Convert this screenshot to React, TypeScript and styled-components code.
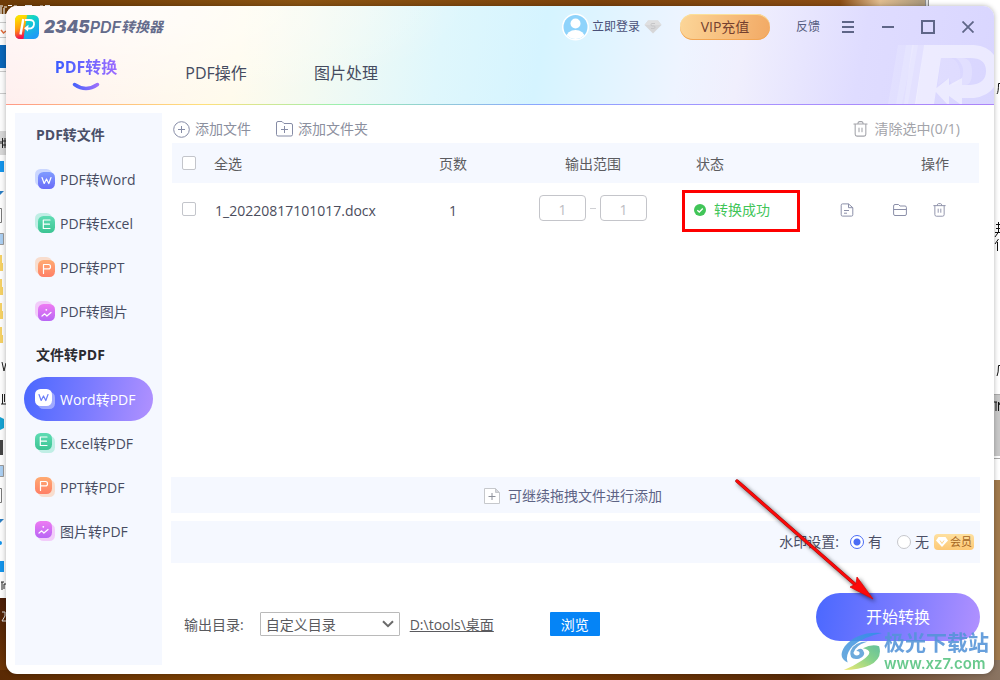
import React, { useState } from "react";
import styled, { createGlobalStyle, css } from "styled-components";

const GlobalStyle = createGlobalStyle`
  *, *::before, *::after { box-sizing: border-box; }
  html, body { margin: 0; height: 100%; }
  body {
    background: #7a4308;
    font-family: "Open Sans", "Noto Sans CJK SC", sans-serif;
    font-size: 14px;
    line-height: 20px;
    color: #4b4f66;
  }
  button, input, select { font: inherit; color: inherit; margin: 0; }
  button { border: 0; padding: 0; background: none; cursor: pointer; white-space: nowrap; }
`;

/* ---------- desktop and window ---------- */

const Desktop = styled.div`
  position: relative;
  display: flex;
  min-height: 100vh;
  padding: 6px;
`;

const Wallpaper = styled.svg`
  position: absolute;
  inset: 0;
  width: 100%;
  height: 100%;
`;

const AppWindow = styled.div`
  position: relative;
  flex: 1;
  min-width: 0;
  display: flex;
  flex-direction: column;
  background: #fff;
  border-radius: 11px;
  overflow: hidden;
  box-shadow: 0 0 5px rgba(0, 0, 0, 0.3);
`;

/* ---------- header ---------- */

const Header = styled.header`
  position: relative;
  height: 99px;
  background:
    linear-gradient(90deg, #ff9a86, #ffe07c 20%, #9af0b0 34%, #8aa6ff 54%, #a792ff 75%, #ab84f8) bottom / 100% 1px no-repeat,
    radial-gradient(360px 100px at 100px 0, rgba(255, 255, 255, 0.75), rgba(255, 255, 255, 0)),
    linear-gradient(100deg, #ffeeee, #fff5ee 11%, #fffbec 24%, #f3faf2 32%, #dff7fc 44%, #d5f4ff 54%, #eef4ff 68%, #f0effd 74%, #dfdcff 86%, #d9d6ff);
`;

const HeaderMark = styled.svg`
  position: absolute;
  right: 0;
  bottom: 1px;
`;

const TitleBar = styled.div`
  position: relative;
  display: flex;
  align-items: center;
  height: 42px;
  padding: 0 6px 0 9px;
`;

const Brand = styled.div`
  display: flex;
  align-items: center;
  gap: 5px;
  margin-right: auto;
`;

const BrandName = styled.h1`
  display: flex;
  align-items: center;
  margin: 0;
  color: #646b8b;
  font: italic 700 14px/20px Inter, "Noto Sans CJK SC", sans-serif;
  white-space: nowrap;
`;

const BrandNumber = styled.span`
  font-size: 17px;
  font-weight: 900;
`;

const BrandFormat = styled.span`
  font-size: 16px;
  font-weight: 600;
`;

const LoginButton = styled.button`
  display: flex;
  align-items: center;
  gap: 3px;
  font-size: 12px;
  color: #4a5078;
`;

const RankBadge = styled.svg`
  margin: 0 18px 0 4px;
`;

const VipButton = styled.button`
  width: 90px;
  height: 26px;
  border-radius: 13px;
  background: linear-gradient(100deg, #fcd699, #f2a964);
  box-shadow: inset 0 1px 0 #fbe09a, inset 0 -1px 0 #f2a552;
  color: #74402f;
`;

const FeedbackButton = styled.button`
  margin: 0 8px 0 26px;
  font-size: 12px;
  color: #565d80;
`;

const WindowButton = styled.button`
  display: grid;
  place-items: center;
  width: 40px;
  height: 30px;
  color: #5f6688;
`;

const Tabs = styled.nav`
  position: relative;
  display: flex;
  padding-left: 15px;
`;

const Tab = styled.a<{ $active?: boolean }>`
  display: flex;
  flex-direction: column;
  align-items: center;
  width: 130px;
  padding-top: 13px;
  font-size: 16px;
  line-height: 24px;
  color: #454b60;
  text-decoration: none;

  ${(p) =>
    p.$active &&
    css`
      padding-top: 7px;
      gap: 3px;
      font-weight: 700;
    `}
`;

const TabLabel = styled.span<{ $active?: boolean }>`
  ${(p) =>
    p.$active &&
    css`
      background: linear-gradient(90deg, #3a5cff, #9c6cff);
      background-clip: text;
      color: transparent;
    `}
`;

/* ---------- sidebar ---------- */

const Body = styled.div`
  flex: 1;
  display: flex;
  gap: 9px;
  padding: 8px 14px 9px 9px;
`;

const Sidebar = styled.aside`
  flex: 0 0 147px;
  background: #f5f8ff;
`;

const GroupTitle = styled.h2<{ $current?: boolean }>`
  margin: 0;
  padding-left: 21px;
  font-size: 14px;
  font-weight: 700;
  line-height: 44px;
  color: ${(p) => (p.$current ? "#2b2b30" : "#4a4f68")};
`;

const MenuLink = styled.a<{ $active?: boolean }>`
  display: flex;
  align-items: center;
  gap: 5px;
  height: 44px;
  margin: 0 9px;
  padding: 0 11px;
  border-radius: 22px;
  text-decoration: none;
  white-space: nowrap;
  color: ${(p) => (p.$active ? "#fff" : "#474c62")};
  background: ${(p) => (p.$active ? "linear-gradient(100deg, #4a68ff, #7b7bff 50%, #b191ff)" : "none")};
`;

const MenuText = styled.span`
  padding-top: 2px;
`;

/* ---------- main ---------- */

const Main = styled.main`
  flex: 1;
  min-width: 0;
  display: flex;
  flex-direction: column;
`;

const Toolbar = styled.div`
  display: flex;
  align-items: center;
  gap: 25px;
  height: 30px;
  padding: 2px 20px 0 2px;
`;

const ToolButton = styled.button<{ $end?: boolean }>`
  display: flex;
  align-items: center;
  gap: ${(p) => (p.$end ? "7px" : "5px")};
  margin-left: ${(p) => (p.$end ? "auto" : "0")};
  color: ${(p) => (p.$end ? "#a3a4aa" : "#8b8f9e")};
`;

const ListArea = styled.div`
  flex: 1;
  padding: 0 1px;
`;

const FileTable = styled.table`
  width: 100%;
  table-layout: fixed;
  border-collapse: collapse;
  line-height: 20px;
`;

const Col = styled.col<{ $width?: number }>`
  width: ${(p) => (p.$width ? `${p.$width}px` : "auto")};
`;

const HeadCell = styled.th<{ $align?: string; $inset?: string }>`
  height: 40px;
  padding: ${(p) => p.$inset ?? "2px 0 0"};
  background: #f5f8ff;
  font-weight: 400;
  text-align: ${(p) => p.$align ?? "left"};
  color: #5c5c60;
`;

const Cell = styled.td<{ $align?: string; $inset?: string }>`
  position: relative;
  height: 54px;
  padding: ${(p) => p.$inset ?? "2px 0 0"};
  text-align: ${(p) => p.$align ?? "left"};
  color: #4b4d5c;
`;

const CheckBox = styled.input`
  appearance: none;
  display: block;
  width: 14px;
  height: 14px;
  border: 1px solid #c3c5cb;
  border-radius: 2px;
  background: #fff;
  &:checked { background: #4a6cff; border-color: #4a6cff; }
`;

const RangeFields = styled.div`
  display: flex;
  align-items: center;
  justify-content: center;
  gap: 4px;
  color: #c4c5ca;
`;

const PageField = styled.input`
  width: 47px;
  height: 26px;
  padding: 2px 0 0;
  border: 1px solid #c4c5ca;
  border-radius: 4px;
  background: #fff;
  text-align: center;
  color: #bcbcc2;
`;

const Dash = styled.i`
  width: 6px;
  height: 1px;
  background: #cfd0d4;
`;

const Status = styled.span`
  display: flex;
  align-items: center;
  gap: 8px;
  color: #41c558;
`;

const Highlight = styled.i`
  position: absolute;
  inset: 7px 1px 5px -1px;
  border: 3px solid #fe0000;
`;

const RowActions = styled.div`
  display: flex;
  justify-content: flex-end;
  gap: 26px;
  padding-right: 33px;
  color: #8b8fa8;
`;

const ActionButton = styled.button<{ $wide?: boolean }>`
  display: block;
  height: 14px;
  margin-right: ${(p) => (p.$wide ? "13px" : "0")};
`;

const DropBar = styled.div`
  display: flex;
  align-items: center;
  justify-content: center;
  gap: 8px;
  height: 36px;
  padding: 1px 5px 0 0;
  background: #f5f8ff;
  color: #5d6385;
`;

const WatermarkBar = styled.div`
  display: flex;
  align-items: center;
  justify-content: flex-end;
  height: 42px;
  margin-top: 8px;
  padding-right: 6px;
  background: #f5f8ff;
`;

const Choice = styled.label`
  display: flex;
  align-items: center;
  gap: 4px;
  margin-left: 11px;
  & + & { margin-left: 15px; }
`;

const Radio = styled.input`
  appearance: none;
  width: 14px;
  height: 14px;
  border: 1px solid #c6c7cc;
  border-radius: 50%;
  background: #fff;
  &:checked {
    border-color: #4a6cf5;
    background: radial-gradient(circle, #4a6cf5 3px, #fff 4px);
  }
`;

const VipTag = styled.span`
  display: flex;
  align-items: center;
  justify-content: center;
  gap: 2px;
  width: 40px;
  height: 16px;
  margin-left: 5px;
  border-radius: 4px;
  background: linear-gradient(180deg, #fee0a0, #fdc875);
  font-size: 11px;
  line-height: 16px;
  color: #a5641e;
  white-space: nowrap;
`;

const Footer = styled.footer`
  display: flex;
  align-items: center;
  height: 102px;
  padding: 6px 0 0 13px;
`;

const OutputLabel = styled.label`
  margin-right: 16px;
  padding-top: 2px;
  color: #5a5a5e;
`;

const SelectBox = styled.span`
  position: relative;
  display: flex;
  align-items: center;
  width: 140px;
  height: 24px;
`;

const FolderSelect = styled.select`
  appearance: none;
  width: 100%;
  height: 24px;
  padding: 2px 24px 0 5px;
  border: 1px solid #bababa;
  border-radius: 1px;
  background: #fff;
  line-height: 20px;
  color: #5a5a5e;
`;

const SelectArrow = styled.svg`
  position: absolute;
  right: 6px;
  pointer-events: none;
`;

const PathLink = styled.a`
  margin-left: 10px;
  width: 140px;
  padding-top: 2px;
  color: #5a5a5e;
`;

const BrowseButton = styled.button`
  width: 50px;
  height: 24px;
  padding-top: 1px;
  border-radius: 1px;
  background: #0584f6;
  color: #fff;
`;

const OutputRow = styled.div`
  flex: 1;
  display: flex;
  align-items: center;
  padding-top: 14px;
`;

const StartButton = styled.button`
  width: 164px;
  height: 48px;
  border-radius: 24px;
  background: linear-gradient(100deg, #4a68ff, #7b7bff 50%, #b191ff);
  font-size: 16px;
  color: #fff;
`;

/* ---------- overlays ---------- */

const Pointer = styled.svg`
  position: absolute;
  right: 110px;
  bottom: 66px;
  filter: drop-shadow(2px 2px 2px rgba(0, 0, 0, 0.6));
`;

const SiteMark = styled.div`
  position: absolute;
  right: 11px;
  bottom: 7px;
  display: flex;
  align-items: center;
  gap: 2px;
  opacity: 0.88;
`;

const SiteText = styled.div`
  display: flex;
  flex-direction: column;
  width: 105px;
  font-family: "Liberation Sans", "Noto Sans CJK SC", sans-serif;
  font-weight: 700;
  white-space: nowrap;
`;

const SiteName = styled.span`
  font-size: 21px;
  line-height: 24px;
  color: #5494d8;
`;

const SiteUrl = styled.span`
  font-family: Inter, sans-serif;
  font-size: 15px;
  font-weight: 600;
  line-height: 18px;
  color: #54c27e;
`;

/* ---------- drawings ---------- */

type Kind = "word" | "excel" | "ppt" | "image";

const tints: Record<Kind, [string, string]> = {
  word: ["#7f9bff", "#6a6cf8"],
  excel: ["#5fdcb4", "#3cc493"],
  ppt: ["#ffab72", "#ff7f66"],
  image: ["#ee7bf2", "#b865f5"],
};

const strokes: Record<Kind, string> = {
  word: "M4.5 6 6.7 12 9 7.5 11.3 12 13.5 6",
  excel: "M12.5 4.5H5.8V13H12.5M6 8.7H12",
  ppt: "M6 14V5H11.2Q13 5 13 7.2T11.2 9.4H6",
  image: "M4.5 12.5 7.2 10.3 9.4 12.5 13.5 9",
};

function KindIcon({ kind, flip, light }: { kind: Kind; flip?: boolean; light?: boolean }) {
  const id = `${kind}-${flip ? "to" : "from"}`;
  const front = flip ? 0 : 3;
  const back = flip ? 3 : 0;
  return (
    <svg width="20" height="20" viewBox="0 0 20 20" fill="none" aria-hidden="true">
      <defs>
        <linearGradient id={id} x1="0" y1="0" x2="0" y2="1">
          <stop stopColor={tints[kind][0]} />
          <stop offset="1" stopColor={tints[kind][1]} />
        </linearGradient>
      </defs>
      <rect x={back} y={back} width="17" height="17" rx="5.5" fill={light ? "#fff" : tints[kind][0]} opacity={light ? 0.4 : 0.35} />
      <rect x={front} y={front} width="17" height="17" rx="5.5" fill={light ? "#fff" : `url(#${id})`} />
      <g transform={`translate(${front - 0.5} ${front - 0.5})`} stroke={light ? "#6d80f8" : "#fff"} strokeWidth="1.2" strokeLinecap="round" strokeLinejoin="round">
        <path d={strokes[kind]} />
        {kind === "image" && <circle cx="8.8" cy="6.3" r="0.9" fill="#fff" stroke="none" />}
      </g>
    </svg>
  );
}

function TrashIcon({ size }: { size: number }) {
  return (
    <svg width={size} height={size + 1} viewBox="0 0 14 15" fill="none" stroke="currentColor" strokeWidth="1" strokeLinecap="round" aria-hidden="true">
      <path d="M.8 2.8H13.2M4.5 2.5Q4.6.6 6 .6H8Q9.4.6 9.5 2.5M2 3V12.5Q2 14.2 3.7 14.2H10.3Q12 14.2 12 12.5V3M5.6 6.5V10M8.4 6.5V10" />
    </svg>
  );
}

function BrandLogo() {
  return (
    <svg width="24" height="24" viewBox="0 0 24 24" aria-hidden="true">
      <defs>
        <linearGradient id="logoWarm" x1="0" y1="0" x2="0.2" y2="1">
          <stop stopColor="#ffe600" />
          <stop offset="0.2" stopColor="#ffd800" />
          <stop offset="0.6" stopColor="#ff9c10" />
          <stop offset="1" stopColor="#f5104c" />
        </linearGradient>
        <linearGradient id="logoCool" x1="0" y1="0" x2="0.6" y2="1">
          <stop stopColor="#8fe060" />
          <stop offset="0.4" stopColor="#10d4c8" />
          <stop offset="1" stopColor="#1e9cf5" />
        </linearGradient>
      </defs>
      <rect width="24" height="24" rx="5.5" fill="url(#logoCool)" />
      <path d="M5.5 0H12L8.5 24H5.5Q0 24 0 18.5V5.5Q0 0 5.5 0Z" fill="url(#logoWarm)" />
      <path d="M5.5 19.500 8.300 4" fill="none" stroke="#fff" strokeWidth="2.4" />
      <path d="M10 5H14.500Q19.500 5 19 9.300 18.500 13.500 14 13.500H12" fill="none" stroke="#fff" strokeWidth="1.8" />
      <path d="M9 13.300 13.500 9.800 13 16.500Z" fill="#fff" />
    </svg>
  );
}

function DesktopBackdrop() {
  return (
    <Wallpaper viewBox="0 0 1000 680" preserveAspectRatio="none" aria-hidden="true">
      <defs>
        <linearGradient id="wood">
          <stop stopColor="#6d3a06" />
          <stop offset="0.3" stopColor="#8a5312" />
          <stop offset="0.6" stopColor="#7c420c" />
          <stop offset="0.84" stopColor="#8a4c14" />
          <stop offset="0.88" stopColor="#e0bd90" />
          <stop offset="0.92" stopColor="#ad9a7c" />
        </linearGradient>
        <linearGradient id="woodLow">
          <stop stopColor="#5a2a04" />
          <stop offset="0.3" stopColor="#8a4a04" />
          <stop offset="0.5" stopColor="#7a3a04" />
          <stop offset="0.8" stopColor="#5a2c08" />
          <stop offset="1" stopColor="#8a7462" />
        </linearGradient>
        <linearGradient id="woodLeft" x1="0" y1="0" x2="0" y2="1">
          <stop stopColor="#4a1e08" />
          <stop offset="1" stopColor="#6d3606" />
        </linearGradient>
      </defs>
      <rect width="1000" height="20" fill="url(#wood)" />
      <rect y="660" width="1000" height="20" fill="url(#woodLow)" />
      <rect y="598" width="20" height="72" fill="url(#woodLeft)" />
      <rect x="980" y="480" width="20" height="180" fill="#a27a4c" />
      <path d="M0 6H3M4 7H7M8 5.500H12M14 6H17M25 5.500H32M40 6H43M45 5.500H50" stroke="#fff" strokeWidth="1.2" />
      <path d="M1 7V14M4 8V14" stroke="#eee" strokeWidth="1.2" />
      {/* left edge of the file browser */}
      <rect y="14" width="20" height="584" fill="#fbfbfb" />
      <path d="M0 22.500H6M0 37.500H6M0 71.500H6M0 93.500H6" stroke="#c9c9c9" />
      <path d="M1 30 3.500 33 6 31" fill="none" stroke="#e06a3a" strokeWidth="1.5" />
      <rect y="45" width="6" height="23" fill="#0b66b8" />
      <rect y="131" width="6" height="24" fill="#d6d6d6" />
      <path d="M1 141V144M2.500 138V148M3 141H6M3 145H6M5 138V148" stroke="#222" />
      <rect y="161" width="4" height="11" fill="#1493e8" />
      <path d="M0 191H4L0 195Z M0 519H4L0 523Z" fill="#2a7cc0" />
      <path d="M0 208.500H1.500V222.500H0M0 488.500H1.500V502.500H0" fill="none" stroke="#777" />
      <path d="M0 233.500H3.500V244.500H0M0 465.500H3.500V476.500H0" fill="#a9cdf0" stroke="#999" />
      <path d="M0 255H2V263H3V271H0ZM0 279H2V287H3V295H0ZM0 303H2V311H3V319H0ZM0 327H2V335H3V343H0Z" fill="#f3cf63" />
      <path d="M2 362 4 371 6 363M2.500 394V404M1 404H6M4.500 394V402" fill="none" stroke="#222" />
      <path d="M0 417 4 419V428L0 430Z" fill="#16a0cf" />
      <path d="M0 440H3V455H0Z" fill="#444" />
      <circle cx="0" cy="543" r="2" fill="#1493e8" />
      <rect y="561" width="4" height="11" fill="#1493e8" />
      <path d="M1 582H4M2 582V590M4 584H6M4 584V589" stroke="#222" />
      <path d="M2 612H5V616L2 621H6" fill="none" stroke="#ddd" />
      {/* right edge of the document window */}
      <rect x="927" width="73" height="480" fill="#fff" />
      <rect x="925" width="4" height="20" fill="#8c8c8c" />
      <rect x="926" width="2" height="20" fill="#ddd" />
      <rect x="980" y="394" width="20" height="62" fill="#c8c8c8" />
      <path d="M980 394.500H1000M980 458.500H1000" stroke="#aaa" />
      <path d="M994 402H997M996 402V411M998.500 411V402L1000 405" fill="none" stroke="#111" />
      <path d="M997 94Q998.500 92 998.500 83.500H1000M997 376Q998.500 373 998.500 365.500H1000M996 224.500H1000M996 228.500H1000M995 232.500H1000M998.500 222V232L995 237M998.500 239L995 244M997.500 242V251" fill="none" stroke="#111" />
    </Wallpaper>
  );
}

function HeaderArt() {
  return (
    <HeaderMark width="106" height="60" viewBox="0 0 106 60" fill="#fff" aria-hidden="true">
      <path opacity="0.14" d="M10 1H26L14 60H0Z" />
      <path opacity="0.16" d="M18 1H30L20 60H8Z" />
      <path opacity="0.2" d="M24 1H36L28 60H16Z" />
      <path opacity="0.12" d="M53 14H60Q70 14 72 27T64 41L61 34 50 41Z" />
      <path opacity="0.2" d="M68 14H74Q84 14 84 28T76 41H74V34Q78 22 68 14Z" />
      <path opacity="0.48" d="M36 1H86Q110 3 110 27T86 54H74V60H72L61 52V60H59L46 46 61 34V41L74 34V41H82Q98 40 98 27T82 14H53L46 60H27Z" />
    </HeaderMark>
  );
}

const convertFrom: [Kind, string][] = [
  ["word", "PDF转Word"],
  ["excel", "PDF转Excel"],
  ["ppt", "PDF转PPT"],
  ["image", "PDF转图片"],
];

const convertTo: [Kind, string][] = [
  ["word", "Word转PDF"],
  ["excel", "Excel转PDF"],
  ["ppt", "PPT转PDF"],
  ["image", "图片转PDF"],
];

export default function App() {
  const [watermark, setWatermark] = useState(true);

  return (
    <>
      <GlobalStyle />
      <Desktop>
        <DesktopBackdrop />
        <AppWindow>
          <Header>
            <HeaderArt />
            <TitleBar>
              <Brand>
                <BrandLogo />
                <BrandName>
                  <BrandNumber>2345</BrandNumber>
                  <BrandFormat>PDF</BrandFormat>
                  转换器
                </BrandName>
              </Brand>
              <LoginButton>
                <svg width="27" height="28" viewBox="0 0 27 28" aria-hidden="true">
                  <defs>
                    <clipPath id="face"><circle cx="13.5" cy="14" r="12" /></clipPath>
                  </defs>
                  <circle cx="13.5" cy="14" r="13.5" fill="#fff" />
                  <circle cx="13.5" cy="14" r="12" fill="#8ed3fb" />
                  <g clipPath="url(#face)" fill="#fff">
                    <circle cx="13.5" cy="10.5" r="5" />
                    <ellipse cx="13.5" cy="25" rx="9.5" ry="8" />
                  </g>
                </svg>
                立即登录
              </LoginButton>
              <RankBadge width="18" height="14" viewBox="0 0 18 14" aria-hidden="true">
                <path d="M4 .5H14L17.5 5 9 13.500.5 5Z" fill="#d6d6d8" />
                <path d="M4 .5H14L17.5 5H.5Z" fill="#dfdfe0" />
                <path d="M11 3.500H8Q7 3.500 7 4.700T8 6H10Q11 6 11 7.200T10 8.500H7" fill="none" stroke="#c6c6c8" />
              </RankBadge>
              <VipButton>VIP充值</VipButton>
              <FeedbackButton>反馈</FeedbackButton>
              <WindowButton aria-label="菜单">
                <svg width="12" height="12" viewBox="0 0 12 12" stroke="currentColor" strokeWidth="2"><path d="M0 1H12M0 6H12M0 11H12" /></svg>
              </WindowButton>
              <WindowButton aria-label="最小化">
                <svg width="12" height="12" viewBox="0 0 12 12" stroke="currentColor" strokeWidth="2"><path d="M0 6H12" /></svg>
              </WindowButton>
              <WindowButton aria-label="最大化">
                <svg width="14" height="14" viewBox="0 0 14 14" fill="none" stroke="currentColor" strokeWidth="2"><path d="M1 1H13V13H1Z" /></svg>
              </WindowButton>
              <WindowButton aria-label="关闭">
                <svg width="12" height="12" viewBox="0 0 12 12" stroke="currentColor" strokeWidth="1.8"><path d="M.5.5 11.500 11.500M11.500.5.5 11.500" /></svg>
              </WindowButton>
            </TitleBar>
            <Tabs>
              <Tab href="#convert" $active>
                <TabLabel $active>PDF转换</TabLabel>
                <svg width="28" height="10" viewBox="0 0 28 10" fill="none" aria-hidden="true">
                  <defs>
                    <linearGradient id="smile"><stop stopColor="#4a62fb" /><stop offset="1" stopColor="#9c70fb" /></linearGradient>
                  </defs>
                  <path d="M2.5 2.500Q14 10.500 25.500 2.500" stroke="url(#smile)" strokeWidth="3.4" strokeLinecap="round" />
                </svg>
              </Tab>
              <Tab href="#operate"><TabLabel>PDF操作</TabLabel></Tab>
              <Tab href="#image"><TabLabel>图片处理</TabLabel></Tab>
            </Tabs>
          </Header>

          <Body>
            <Sidebar>
              <GroupTitle>PDF转文件</GroupTitle>
              {convertFrom.map(([kind, label]) => (
                <MenuLink key={label} href={`#from-${kind}`}>
                  <KindIcon kind={kind} />
                  <MenuText>{label}</MenuText>
                </MenuLink>
              ))}
              <GroupTitle $current>文件转PDF</GroupTitle>
              {convertTo.map(([kind, label]) => (
                <MenuLink key={label} href={`#to-${kind}`} $active={kind === "word"}>
                  <KindIcon kind={kind} flip light={kind === "word"} />
                  <MenuText>{label}</MenuText>
                </MenuLink>
              ))}
            </Sidebar>

            <Main>
              <Toolbar>
                <ToolButton>
                  <svg width="17" height="17" viewBox="0 0 17 17" fill="none" stroke="#868ca6" aria-hidden="true">
                    <circle cx="8.5" cy="8.5" r="7.8" />
                    <path d="M8.5 5V12M5 8.500H12" />
                  </svg>
                  添加文件
                </ToolButton>
                <ToolButton>
                  <svg width="17" height="16" viewBox="0 0 17 16" fill="none" stroke="#868ca6" aria-hidden="true">
                    <path d="M.5 13.500V2Q.5.500 2 .500H6L8 2.500H15Q16.500 2.500 16.500 4V13.500Q16.500 15 15 15H2Q.500 15 .500 13.500ZM8.500 5V12M5 8.500H12" />
                  </svg>
                  添加文件夹
                </ToolButton>
                <ToolButton $end>
                  <TrashIcon size={15} />
                  清除选中(0/1)
                </ToolButton>
              </Toolbar>

              <ListArea>
                <FileTable>
                  <colgroup>
                    <Col $width={42} />
                    <Col />
                    <Col $width={100} />
                    <Col $width={180} />
                    <Col $width={118} />
                    <Col $width={178} />
                  </colgroup>
                  <thead>
                    <tr>
                      <HeadCell $inset="0 0 0 10px"><CheckBox type="checkbox" id="all" aria-label="全选" /></HeadCell>
                      <HeadCell><label htmlFor="all">全选</label></HeadCell>
                      <HeadCell $align="center">页数</HeadCell>
                      <HeadCell $align="center">输出范围</HeadCell>
                      <HeadCell $inset="2px 0 0 13px">状态</HeadCell>
                      <HeadCell $align="right" $inset="2px 30px 0 0">操作</HeadCell>
                    </tr>
                  </thead>
                  <tbody>
                    <tr>
                      <Cell $inset="0 0 2px 10px"><CheckBox type="checkbox" aria-label="1_20220817101017.docx" /></Cell>
                      <Cell $inset="2px 0 0 1px">1_20220817101017.docx</Cell>
                      <Cell $align="center">1</Cell>
                      <Cell $inset="0 0 4px">
                        <RangeFields>
                          <PageField defaultValue="1" aria-label="起始页" />
                          <Dash />
                          <PageField defaultValue="1" aria-label="结束页" />
                        </RangeFields>
                      </Cell>
                      <Cell $inset="0 0 0 11px">
                        <Status>
                          <svg width="12" height="12" viewBox="0 0 12 12" fill="none" aria-hidden="true">
                            <circle cx="6" cy="6" r="6" fill="#41c558" />
                            <path d="M3.3 6.200 5.300 8 8.800 4.500" stroke="#fff" strokeWidth="1.3" />
                          </svg>
                          转换成功
                        </Status>
                        <Highlight />
                      </Cell>
                      <Cell $inset="0 0 2px">
                        <RowActions>
                          <ActionButton $wide aria-label="打开文件">
                            <svg width="14" height="14" viewBox="0 0 14 14" fill="none" stroke="currentColor">
                              <path d="M8.5.900H2.500Q1.200.900 1.200 2.200V11.800Q1.200 13.100 2.500 13.100H11.500Q12.800 13.100 12.800 11.800V4.700ZM8.500.900V4.700H12.800M4 7.500H9M4 10.200H7" />
                            </svg>
                          </ActionButton>
                          <ActionButton aria-label="打开文件夹">
                            <svg width="14" height="14" viewBox="0 0 14 14" fill="none" stroke="currentColor">
                              <path d="M.6 11V3Q.600 1.500 2 1.500H5.500L7 3H12Q13.400 3 13.400 4.400V11Q13.400 12.500 12 12.500H2Q.600 12.500 .600 11ZM.600 6.500H13.400" />
                            </svg>
                          </ActionButton>
                          <ActionButton aria-label="删除"><TrashIcon size={13} /></ActionButton>
                        </RowActions>
                      </Cell>
                    </tr>
                  </tbody>
                </FileTable>
              </ListArea>

              <DropBar>
                <svg width="16" height="16" viewBox="0 0 16 16" fill="#fff" stroke="#c6c8cc" aria-hidden="true">
                  <path d="M.5.500H11.500L15.500 4.500V15.500H.500Z" />
                  <path d="M11.5.500V4.500H15.500Z" fill="#d5d6da" />
                  <path d="M8 5V12M4.500 8.500H11.500" stroke="#8d909a" />
                </svg>
                可继续拖拽文件进行添加
              </DropBar>

              <WatermarkBar role="radiogroup" aria-label="水印设置">
                <span>水印设置:</span>
                <Choice>
                  <Radio type="radio" name="watermark" checked={watermark} onChange={() => setWatermark(true)} />
                  有
                </Choice>
                <Choice>
                  <Radio type="radio" name="watermark" checked={!watermark} onChange={() => setWatermark(false)} />
                  无
                </Choice>
                <VipTag>
                  <svg width="12" height="10" viewBox="0 0 12 10" fill="#fff" aria-hidden="true">
                    <path d="M2.5 0H9.500L12 3.500 6 10 0 3.500Z" />
                    <path d="M4 3.500 6 6.500 8 3.500" fill="none" stroke="#fdd48a" />
                  </svg>
                  会员
                </VipTag>
              </WatermarkBar>

              <Footer>
                <OutputRow>
                  <OutputLabel htmlFor="folder">输出目录:</OutputLabel>
                  <SelectBox>
                    <FolderSelect id="folder">
                      <option>自定义目录</option>
                    </FolderSelect>
                    <SelectArrow width="12" height="8" viewBox="0 0 12 8" fill="none" stroke="#6a6a6a" strokeWidth="2">
                      <path d="M1 1.200 6 6.200 11 1.200" />
                    </SelectArrow>
                  </SelectBox>
                  <PathLink href="#folder">D:\tools\桌面</PathLink>
                  <BrowseButton>浏览</BrowseButton>
                </OutputRow>
                <StartButton>开始转换</StartButton>
              </Footer>
            </Main>
          </Body>
        </AppWindow>

        <Pointer width="160" height="140" viewBox="0 0 160 140" aria-hidden="true">
          <path d="M7 7 128 113" stroke="#8c0d0d" strokeWidth="3.4" strokeLinecap="round" />
          <path d="M7 7 128 113" stroke="#fb0a0a" strokeWidth="2.6" strokeLinecap="round" />
          <path d="M143 125 120 113 126 110 127 103Z" fill="#fb0a0a" stroke="#e00808" strokeWidth="0.8" />
        </Pointer>

        <SiteMark>
          <svg width="42" height="40" viewBox="0 0 44 42" fill="none" aria-hidden="true">
            <defs>
              <linearGradient id="swirlBlue" x1="0" y1="1" x2="1" y2="0">
                <stop stopColor="#5aa0d8" />
                <stop offset="1" stopColor="#2f8fe8" />
              </linearGradient>
              <linearGradient id="swirlGreen" x1="0" y1="1" x2="1" y2="0">
                <stop stopColor="#f0e860" />
                <stop offset="0.6" stopColor="#74cc7c" />
                <stop offset="1" stopColor="#4fb890" />
              </linearGradient>
            </defs>
            <path d="M44 1Q18-1 5 15-3 27 8 32 5 24 13 15 24 5 44 1Z" fill="url(#swirlBlue)" />
            <path d="M29 10Q15 10 11 20 9 30 20 28 28 25 24 19 21 16 17 20 22 20 20 24 16 26 14 22 16 14 29 10Z" fill="#5a9fd8" />
            <path d="M41 15Q45 28 31 35 20 40 4 40 14 36 23 30 38 20 24 17 34 12 41 15Z" fill="url(#swirlGreen)" />
          </svg>
          <SiteText>
            <SiteName>极光下载站</SiteName>
            <SiteUrl>www.xz7.com</SiteUrl>
          </SiteText>
        </SiteMark>
      </Desktop>
    </>
  );
}
